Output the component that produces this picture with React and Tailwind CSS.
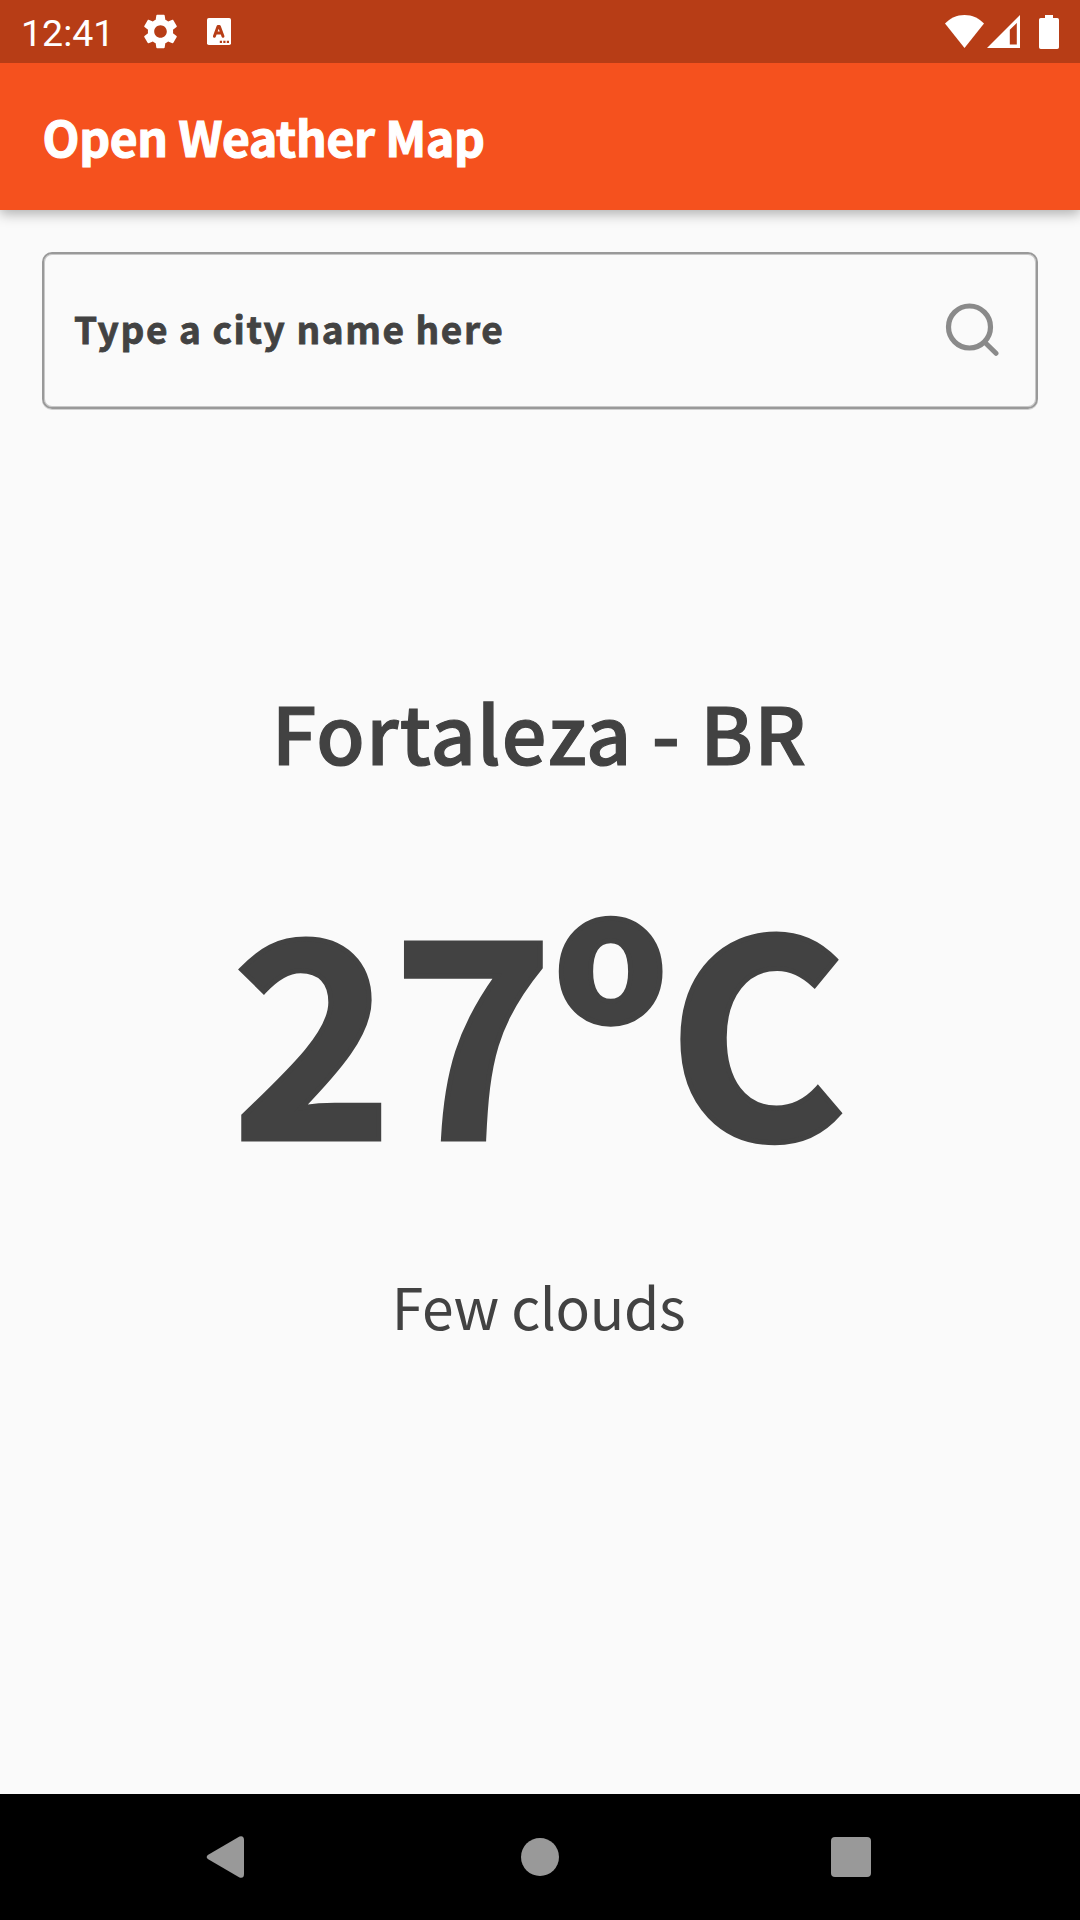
function StatusBar() {
  return (
    <div className="relative z-10 flex h-[63px] shrink-0 items-center bg-[#b73d16] text-white">
      <span className="ml-[21px] w-[122px] font-[Roboto,sans-serif] text-[37.5px] leading-[60px] pt-[3px]">12:41</span>
      <svg className="h-[35px] w-[35px] shrink-0" viewBox="2 2 20 20" fill="currentColor">
        <path d="M19.14 12.94c.04-.3.06-.61.06-.94 0-.32-.02-.64-.07-.94l2.03-1.58c.18-.14.23-.41.12-.61l-1.92-3.32c-.12-.22-.37-.29-.59-.22l-2.39.96c-.5-.38-1.03-.7-1.62-.94l-.36-2.54c-.04-.24-.24-.41-.48-.41h-3.84c-.24 0-.43.17-.47.41l-.36 2.54c-.59.24-1.13.57-1.62.94l-2.39-.96c-.22-.08-.47 0-.59.22L2.74 8.87c-.12.21-.08.47.12.61l2.03 1.58c-.05.3-.09.63-.09.94s.02.64.07.94l-2.03 1.58c-.18.14-.23.41-.12.61l1.92 3.32c.12.22.37.29.59.22l2.39-.96c.5.38 1.03.7 1.62.94l.36 2.54c.05.24.24.41.48.41h3.84c.24 0 .44-.17.47-.41l.36-2.54c.59-.24 1.13-.56 1.62-.94l2.39.96c.22.08.47 0 .59-.22l1.92-3.32c.12-.22.07-.47-.12-.61l-2.01-1.58zM12 15.6c-1.98 0-3.6-1.62-3.6-3.6s1.62-3.6 3.6-3.6 3.6 1.62 3.6 3.6-1.62 3.6-3.6 3.6z" />
      </svg>
      <svg className="ml-[29px] h-[27px] w-[24px] shrink-0" viewBox="0 0 24 27">
        <rect width="24" height="27" rx="1.8" fill="currentColor" />
        <path d="M7.4 18.3 11 8.4h1.4L16 18.3M8.8 15h5.8" fill="none" stroke="#b73d16" strokeWidth="2.9" strokeLinejoin="round" strokeLinecap="round" />
        <path d="M12.8 22.8h2.2v2.2h-2.2zM16.3 22.8h2.2v2.2h-2.2zM19.8 22.8h2.2v2.2h-2.2z" fill="#b73d16" />
      </svg>
      <div className="ml-auto mr-[21px] flex h-[34px]">
        <svg className="h-[34px] w-[39px]" viewBox="0 0 39 34" fill="currentColor">
          <path d="M19.5 33 0 8.6C5 3.4 11.7 0 19.5 0S34 3.4 39 8.6z" />
        </svg>
        <svg className="ml-[3px] h-[34px] w-[33px]" viewBox="0 0 33 34" fill="currentColor">
          <path fillRule="evenodd" d="M0 33 33 0v33zM22.8 14.8v14.7h7V8z" />
        </svg>
        <svg className="ml-[19px] h-[34px] w-[20px]" viewBox="0 0 20 34" fill="currentColor">
          <path d="M6 0h8v3h4.2A1.8 1.8 0 0 1 20 4.8v27.4a1.8 1.8 0 0 1-1.8 1.8H1.8A1.8 1.8 0 0 1 0 32.2V4.8A1.8 1.8 0 0 1 1.8 3H6z" />
        </svg>
      </div>
    </div>
  );
}

function SearchBox() {
  return (
    <div className="mx-[42px] mt-[42px] flex h-[157px] shrink-0 items-center justify-between rounded-[10px] border-2 border-[#999] pr-[37px] pl-[30px] shadow-[inset_0_0_0_1px_#c8c8c8,0_1px_0_#d0d0d0]">
      <span className="pb-[3px] text-[37px] font-bold tracking-[1.6px] [-webkit-text-stroke:0.8px_#424242]">Type a city name here</span>
      <svg className="mb-[2px] h-[54px] w-[54px]" viewBox="0 0 54 54" fill="none" stroke="#8a8a8a" strokeLinecap="round">
        <circle cx="24.5" cy="24" r="21" strokeWidth="5.2" />
        <path d="m40 39.5 11 10.8" strokeWidth="5" />
      </svg>
    </div>
  );
}

function NavigationBar() {
  return (
    <div className="flex h-[126px] shrink-0 items-center justify-between bg-black pr-[209px] pl-[206px]">
      <svg className="h-[42px] w-[38px]" viewBox="0 0 38 42" fill="#999">
        <path d="M1.8 19 33.5.4Q38 -.8 38 4V38Q38 42.8 33.5 41.6L1.8 23Q-.4 21 1.8 19z" />
      </svg>
      <div className="ml-[4px] h-[38px] w-[38px] rounded-full bg-[#999]" />
      <div className="h-[40px] w-[40px] rounded-[4px] bg-[#999]" />
    </div>
  );
}

export default function App() {
  return (
    <div className="flex h-[1920px] w-[1080px] flex-col bg-[#fafafa] font-['Noto_Sans_CJK_JP',sans-serif] whitespace-nowrap text-[#424242]">
      <StatusBar />
      <div className="flex h-[147px] shrink-0 items-center bg-[#f5511e] pb-[1px] pl-[42.5px] shadow-[0_4px_12px_rgba(0,0,0,0.3)]">
        <span className="text-[48px] font-bold tracking-[-0.3px] text-white [-webkit-text-stroke:1.2px_white]">Open Weather Map</span>
      </div>
      <SearchBox />
      <div className="flex flex-1 flex-col items-center">
        <span className="mt-[272px] pr-[1px] text-[79px] leading-[100px] font-medium tracking-[1.25px] [-webkit-text-stroke:1.2px_#424242]">Fortaleza - BR</span>
        <span className="mt-[44px] pr-[1px] text-[272px] leading-[390px] font-bold tracking-[0.3px] [-webkit-text-stroke:5px_#424242]">27ºC</span>
        <span className="mt-[50px] pr-[3px] text-[57px] leading-[80px] tracking-[-0.4px]">Few clouds</span>
      </div>
      <NavigationBar />
    </div>
  );
}
